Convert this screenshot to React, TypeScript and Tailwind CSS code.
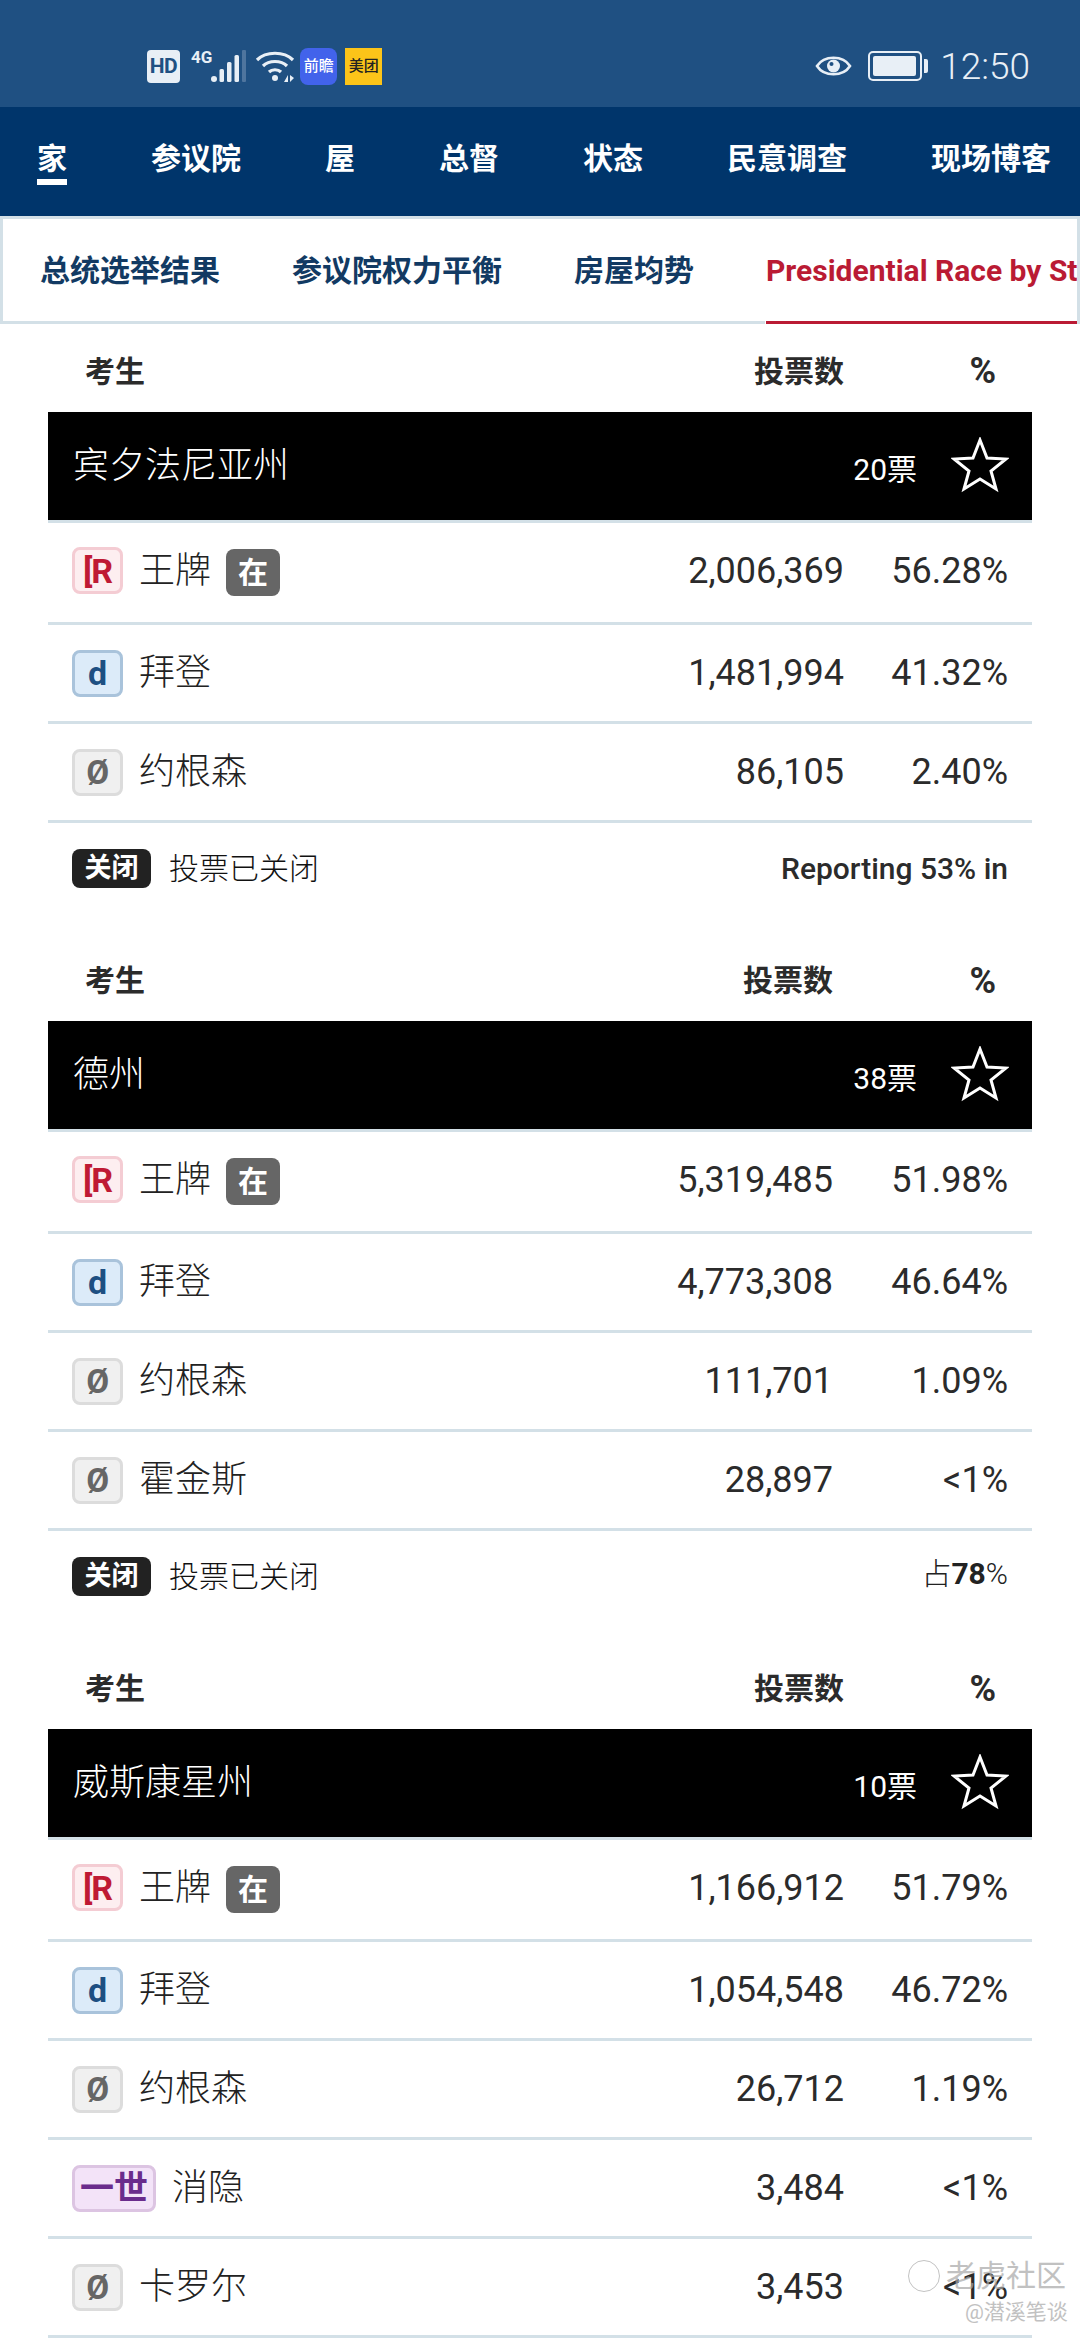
import React from "react";

const FONT = "font-['Roboto','Noto_Sans_CJK_SC',sans-serif]";

type Party = "r" | "d" | "n" | "i";
type Row = { party: Party; name: string; votes: string; pct: string; inc?: boolean };
type Sec = { state: string; ev: string; pctW: string; rows: Row[]; report: React.ReactNode };

const sections: Sec[] = [
  {
    state: "宾夕法尼亚州",
    ev: "20票",
    pctW: "w-[188px]",
    rows: [
      { party: "r", name: "王牌", votes: "2,006,369", pct: "56.28%", inc: true },
      { party: "d", name: "拜登", votes: "1,481,994", pct: "41.32%" },
      { party: "n", name: "约根森", votes: "86,105", pct: "2.40%" },
    ],
    report: <span className="text-[30px] font-medium">Reporting 53% in</span>,
  },
  {
    state: "德州",
    ev: "38票",
    pctW: "w-[199px]",
    rows: [
      { party: "r", name: "王牌", votes: "5,319,485", pct: "51.98%", inc: true },
      { party: "d", name: "拜登", votes: "4,773,308", pct: "46.64%" },
      { party: "n", name: "约根森", votes: "111,701", pct: "1.09%" },
      { party: "n", name: "霍金斯", votes: "28,897", pct: "<1%" },
    ],
    report: (
      <span className="mb-[6px] text-[30px] font-light text-[#222]">
        占<span className="font-bold">78</span>%
      </span>
    ),
  },
  {
    state: "威斯康星州",
    ev: "10票",
    pctW: "w-[188px]",
    rows: [
      { party: "r", name: "王牌", votes: "1,166,912", pct: "51.79%", inc: true },
      { party: "d", name: "拜登", votes: "1,054,548", pct: "46.72%" },
      { party: "n", name: "约根森", votes: "26,712", pct: "1.19%" },
      { party: "i", name: "消隐", votes: "3,484", pct: "<1%" },
      { party: "n", name: "卡罗尔", votes: "3,453", pct: "<1%" },
    ],
    report: null,
  },
];

function PartyBadge({ party }: { party: Party }) {
  if (party === "r")
    return (
      <span className="flex h-[47px] w-[51px] items-center justify-center rounded-[8px] border-[3px] border-[#f4ccd3] bg-[#fdeef0] text-[34px] font-bold leading-none tracking-[-1px] text-[#bf1a34]">
        [R
      </span>
    );
  if (party === "d")
    return (
      <span className="flex h-[47px] w-[51px] items-center justify-center rounded-[8px] border-[3px] border-[#a9c3db] bg-[#dcebf9] text-[34px] font-bold leading-none text-[#1d4f82]">
        d
      </span>
    );
  if (party === "i")
    return (
      <span className="flex h-[47px] w-[84px] items-center justify-center rounded-[8px] border-[3px] border-[#dcc4e2] bg-[#f3e3f8] text-[34px] font-bold leading-none text-[#6a2c8c]">
        一世
      </span>
    );
  return (
    <span className="flex h-[47px] w-[51px] items-center justify-center rounded-[8px] border-[3px] border-[#dcdcdc] bg-[#f0f0f0] text-[33px] font-bold leading-none text-[#666]">
      Ø
    </span>
  );
}

function Star() {
  return (
    <svg width="58" height="56" viewBox="0 0 58 56" className="mb-[3px] shrink-0">
      <polygon
        points="29,3 36,21 55,22 40,34 45,52 29,42 13,52 18,34 3,22 22,21"
        fill="none"
        stroke="#fff"
        strokeWidth="3"
        strokeLinejoin="miter"
      />
    </svg>
  );
}

function StateTable({ sec, index }: { sec: Sec; index: number }) {
  return (
    <section className="mx-[48px]">
      <div className={`flex items-center text-[30px] font-bold text-[#2b2b2b] ${index === 0 ? "h-[88px] pt-[6px]" : "h-[82px] pt-[1px]"}`}>
        <span className="ml-[37px] flex-1">考生</span>
        <span>投票数</span>
        <span className={`${sec.pctW} pr-[36px] text-right text-[36px] leading-none`}>%</span>
      </div>
      <div className="flex h-[108px] items-center bg-black pl-[25px] pr-[23px] text-white">
        <span className="flex-1 text-[36px] font-light">{sec.state}</span>
        <span className="mt-[6px] mr-[34px] text-[30px]">{sec.ev}</span>
        <Star />
      </div>
      <div className="border-t-[3px] border-[#d3e0e7]">
        {sec.rows.map((r, i) => (
          <div
            key={i}
            className={`flex items-center border-b-[3px] border-[#d3e0e7] pl-[24px] text-[#2b2b2b] ${i === 0 ? "h-[102px] pb-[4px]" : "h-[99px]"}`}
          >
            <PartyBadge party={r.party} />
            <span className="ml-[16px] text-[36px] font-light leading-none text-[#222]">{r.name}</span>
            {r.inc && (
              <span className="ml-[15px] mt-[3px] flex h-[47px] w-[54px] items-center justify-center rounded-[8px] bg-[#666] text-[30px] font-bold text-white">
                在
              </span>
            )}
            <span className="ml-auto text-[36px]">{r.votes}</span>
            <span className={`${sec.pctW} pr-[24px] text-right text-[36px]`}>{r.pct}</span>
          </div>
        ))}
      </div>
      {sec.report && (
        <div className="flex h-[90px] items-center pl-[24px] pr-[24px] text-[#2b2b2b]">
          <span className="flex h-[39px] w-[79px] items-center justify-center rounded-[8px] bg-[#222] text-[27px] font-bold text-white">
            关闭
          </span>
          <span className="ml-[18px] flex-1 text-[30px] font-light text-[#111]">投票已关闭</span>
          {sec.report}
        </div>
      )}
      {sec.report && <div className="h-[26px]" />}
    </section>
  );
}

function StatusBar() {
  return (
    <div className="flex h-[107px] items-center bg-[#1f5082] pl-[147px] pr-[50px] pt-[25px] text-[#e8eff6]">
      <span className="flex h-[33px] w-[33px] items-center justify-center rounded-[4px] bg-[#e8eff6] text-[21px] font-bold leading-none tracking-[-0.5px] text-[#1f5082]">
        HD
      </span>
      <span className="mb-[18px] ml-[11px] text-[17px] font-bold leading-none">4G</span>
      <svg width="36" height="34" viewBox="0 0 36 34" className="-ml-[1px]" fill="#e8eff6">
        <circle cx="3" cy="30" r="3" />
        <rect x="8.5" y="20" width="4.5" height="13" rx="1.5" />
        <rect x="16" y="13" width="4.5" height="20" rx="1.5" />
        <rect x="23.5" y="6" width="4.5" height="27" rx="1.5" />
        <rect x="31" y="1" width="4" height="32" rx="1" fill="#4f759e" />
      </svg>
      <svg width="40" height="34" viewBox="0 0 40 34" className="ml-[8px]" fill="none" stroke="#e8eff6" strokeWidth="3.2">
        <path d="M2 11 C 11 2, 29 2, 38 11" />
        <path d="M8 17 C 14 11, 26 11, 32 17" />
        <path d="M14 23 C 17 20, 23 20, 26 23" />
        <circle cx="20" cy="29" r="3" fill="#e8eff6" stroke="none" />
        <path d="M29 33 L33 26 L33 33 Z M35 26 L35 33 L39 29 Z" fill="#e8eff6" stroke="none" />
      </svg>
      <span className="ml-[5px] flex h-[37px] w-[37px] items-center justify-center rounded-[8px] bg-[#4263eb] text-[15px] font-medium leading-none text-white">
        前瞻
      </span>
      <span className="ml-[8px] flex h-[37px] w-[37px] items-center justify-center bg-[#fcc419] text-[15px] font-medium leading-none text-[#222]">
        美团
      </span>
      <svg width="37" height="28" viewBox="0 0 37 28" className="ml-auto" fill="none" stroke="#e8eff6" strokeWidth="2.6">
        <path d="M2 14 C 9 3, 28 3, 35 14 C 28 25, 9 25, 2 14 Z" />
        <circle cx="18.5" cy="14" r="6.5" fill="#e8eff6" stroke="none" />
        <circle cx="16.5" cy="12" r="2" fill="#1f5082" stroke="none" />
      </svg>
      <span className="ml-[16px] flex h-[30px] w-[54px] items-center rounded-[5px] border-2 border-[#e8eff6] p-[3px]">
        <span className="h-full w-[43px] rounded-[2px] bg-[#e8eff6]" />
      </span>
      <span className="ml-[2px] h-[14px] w-[4px] rounded-r-[2px] bg-[#e8eff6]" />
      <span className="ml-[12px] text-[37px] font-light leading-none">12:50</span>
    </div>
  );
}

function MainNav() {
  const items = ["家", "参议院", "屋", "总督", "状态", "民意调查", "现场博客"];
  return (
    <nav className="flex h-[109px] items-center gap-[84px] overflow-hidden bg-[#00356b] pl-[37px] text-[30px] font-bold text-white">
      {items.map((t, i) => (
        <span key={t} className={`relative shrink-0 leading-[40px] ${i === 0 ? "border-b-[6px] border-white" : "mb-[6px]"}`}>
          {t}
        </span>
      ))}
    </nav>
  );
}

function SubNav() {
  return (
    <div className="flex h-[108px] overflow-hidden border-[3px] border-b-0 border-[#d3e0e7] bg-white pl-[37px] text-[30px] font-bold text-[#123a63]">
      <span className="mr-[72px] flex h-[102px] shrink-0 items-center">总统选举结果</span>
      <span className="mr-[72px] flex h-[102px] shrink-0 items-center">参议院权力平衡</span>
      <span className="mr-[72px] flex h-[102px] shrink-0 items-center">房屋均势</span>
      <span className="flex h-[105px] grow items-center overflow-hidden whitespace-nowrap border-b-[3px] border-[#ba1b34] text-[#ba1b34]">
        Presidential Race by State
      </span>
    </div>
  );
}

export default function App() {
  return (
    <div className={`relative h-[2340px] w-[1080px] overflow-hidden bg-white ${FONT}`}>
      <StatusBar />
      <MainNav />
      <SubNav />
      <div className="-mt-[3px] mr-[315px] h-[3px] bg-[#d3e0e7]" />
      {sections.map((s, i) => (
        <StateTable key={i} sec={s} index={i} />
      ))}
      <div className="pointer-events-none absolute left-[908px] top-[2260px] opacity-70">
        <div className="flex items-center gap-[6px] text-[30px] leading-none">
          <span className="h-[32px] w-[32px] rounded-full border-[1.5px] border-[#aaa]" />
          <span className="text-[#a8a8a8]">老虎社区</span>
        </div>
        <div className="mt-[10px] pl-[57px] text-[21px] leading-none text-[#a8a8a8]">@潜溪笔谈</div>
      </div>
    </div>
  );
}
